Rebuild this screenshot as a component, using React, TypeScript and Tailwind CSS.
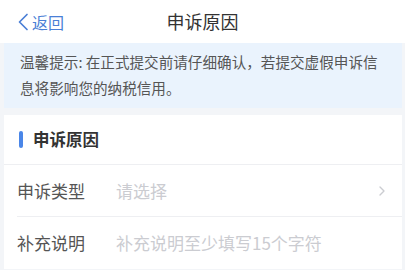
import { ChevronRight } from "lucide-react";

type Row = {
  label: string;
  placeholder: string;
  arrow?: boolean;
};

export default function App() {
  const rows: Row[] = [
    { label: "申诉类型", placeholder: "请选择", arrow: true },
    { label: "补充说明", placeholder: "补充说明至少填写15个字符" },
  ];

  return (
    <div className="w-[405px] h-[270px] overflow-hidden bg-[#f3f5f8] font-['Noto_Sans_CJK_SC',sans-serif]">
      {/* header */}
      <div className="h-[43px] bg-white flex items-center relative">
        <div className="flex items-center pl-[17px] text-[#4a7fd6] text-[16px]">
          <svg width="12" height="18" viewBox="0 0 12 18" fill="none">
            <path d="M10 1.5L2.5 9l7.5 7.5" stroke="#4a7fd6" strokeWidth="1.7" strokeLinecap="round" strokeLinejoin="round" />
          </svg>
          <span className="ml-[3px]">返回</span>
        </div>
        <div className="absolute left-0 right-0 text-center text-[18px] text-[#333] pointer-events-none">
          申诉原因
        </div>
      </div>

      {/* notice */}
      <div className="mx-[4px] mr-[3px] h-[65px] bg-[#eaf3fd] px-[16px] pt-[6px] text-[14.6px] leading-[26px] text-[#555]">
        温馨提示: 在正式提交前请仔细确认，若提交虚假申诉信
        <br />
        息将影响您的纳税信用。
      </div>

      {/* form card */}
      <div className="mt-[7px] mx-[4px] mr-[3px] bg-white">
        <div className="h-[50px] flex items-center border-b border-[#eeeff2] pl-[15px]">
          <div className="w-[4px] h-[17px] rounded-full bg-[#4a86e8]" />
          <span className="ml-[10px] text-[16.5px] font-bold text-[#333]">申诉原因</span>
        </div>
        {rows.map((row, i) => (
          <div key={row.label} className="pl-[13px]">
            <div
              className={`h-[52px] flex items-center pr-[12px] ${
                i < rows.length - 1 ? "border-b border-[#eeeff2]" : ""
              }`}
            >
              <span className="w-[99px] text-[17px] text-[#555]">{row.label}</span>
              <span className="flex-1 text-[17px] text-[#cbccd1]">{row.placeholder}</span>
              {row.arrow && <ChevronRight size={16} strokeWidth={2} className="text-[#cbccd1]" />}
            </div>
          </div>
        ))}
      </div>
    </div>
  );
}
